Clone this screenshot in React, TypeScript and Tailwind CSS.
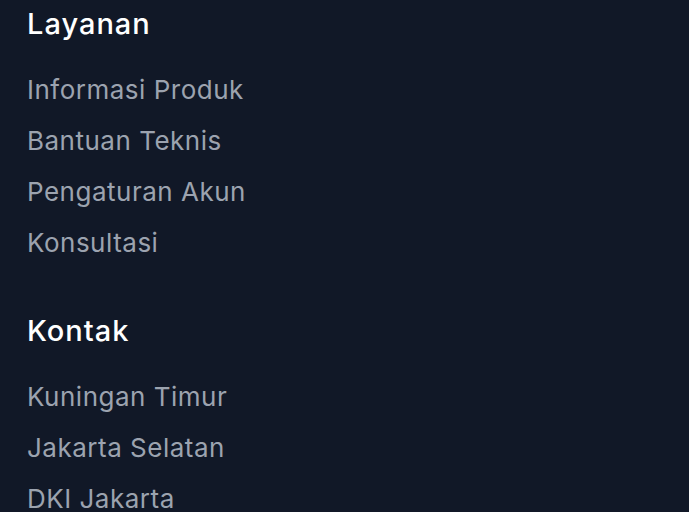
export default function App() {
  const sections = [
    { title: 'Layanan', items: ['Informasi Produk', 'Bantuan Teknis', 'Pengaturan Akun', 'Konsultasi'] },
    { title: 'Kontak', items: ['Kuningan Timur', 'Jakarta Selatan', 'DKI Jakarta'] },
  ];

  return (
    <div className="min-h-screen w-full bg-[#111827] pl-[27px] pt-[4px] font-['Inter',sans-serif] overflow-hidden">
      <div className="flex flex-col gap-[43px]">
        {sections.map(section => (
          <div key={section.title} className="flex flex-col">
            <h3 className="text-[29px] leading-[40px] font-medium tracking-[1px] text-white mb-[20px]">{section.title}</h3>
            <ul className="flex flex-col">
              {section.items.map(item => (
                <li key={item}>
                  <a href="#" className="text-[26px] leading-[51px] tracking-[0.5px] text-[#9ca3af]">{item}</a>
                </li>
              ))}
            </ul>
          </div>
        ))}
      </div>
    </div>
  );
}
